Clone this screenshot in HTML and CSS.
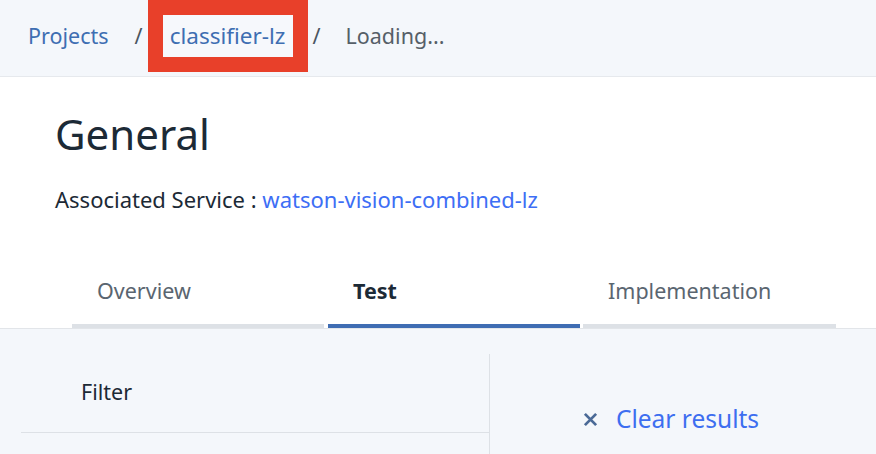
FILE: index.html
```html
<!DOCTYPE html>
<html>
<head>
<meta charset="utf-8">
<link rel="stylesheet" href="styles.css">
</head>
<body>
<header class="crumbs">
  <a class="crumb">Projects</a>
  <span class="sep sep-1">/</span>
  <span class="highlight"><a class="crumb inner">classifier-lz</a></span>
  <span class="sep sep-2">/</span>
  <span class="crumb-current">Loading...</span>
</header>
<section class="head">
  <h1 class="title">General</h1>
  <p class="service">Associated Service : <a class="service-link">watson-vision-combined-lz</a></p>
  <nav class="tabs">
    <div class="tab">Overview</div>
    <div class="tab active">Test</div>
    <div class="tab last">Implementation</div>
  </nav>
</section>
<section class="body">
  <div class="left">
    <div class="filter">Filter</div>
  </div>
  <div class="right">
    <a class="clear"><svg class="x" viewBox="0 0 16 16" width="15" height="15"><path d="M2 2 L14 14 M14 2 L2 14" stroke="#4b6a97" stroke-width="3" stroke-linecap="butt"/></svg><span>Clear results</span></a>
  </div>
</section>
</body>
</html>
```
FILE: styles.css
```css
* { box-sizing: border-box; }
html, body { margin: 0; padding: 0; }
body {
  width: 876px;
  height: 454px;
  overflow: hidden;
  background: #f4f7fb;
  font-family: "Noto Sans", "Open Sans", sans-serif;
}
.crumbs {
  height: 77px;
  background: #f4f7fb;
  border-bottom: 1px solid #e6e9ed;
  display: flex;
  align-items: flex-start;
  padding-left: 28px;
  font-size: 21.5px;
}
.crumb { color: #3e6eb2; }
.crumbs > .crumb, .sep, .crumb-current { margin-top: 21px; line-height: 30px; }
.sep { color: #4a5560; }
.sep-1 { margin-left: 26px; margin-right: 5px; }
.sep-2 { margin-left: 5px; margin-right: 25px; }
.crumb-current { color: #565f68; }
.highlight {
  width: 160px;
  height: 72px;
  border: 15px solid #e8402a;
  background: #f6f8fc;
  display: flex;
  align-items: center;
  justify-content: center;
}
.inner { line-height: 30px; margin-top: -1px; font-size: 22.5px; }
.head {
  background: #ffffff;
  border-bottom: 1px solid #e2e5e9;
}
.title {
  margin: 0;
  padding: 27px 0 0 55px;
  font-weight: 400;
  font-size: 42px;
  line-height: 60px;
  color: #1c2a36;
}
.service {
  margin: 20px 0 0 55px;
  font-size: 22px;
  line-height: 30px;
  color: #1c2a36;
}
.service-link { color: #3d6ef5; }
.tabs {
  display: flex;
  margin-left: 72px;
  margin-top: 62px;
}
.tab {
  width: 252px;
  margin-right: 4px;
  padding: 0 0 18px 25px;
  font-size: 21.5px;
  line-height: 30px;
  color: #5a6570;
  border-bottom: 4px solid #dde1e6;
}
.tab.last { width: 253px; margin-left: -1px; margin-right: 0; }
.tab.active {
  color: #1c2a36;
  font-weight: 700;
  border-bottom-color: #3f6db3;
}
.body {
  display: flex;
  padding-top: 25px;
}
.left {
  width: 468px;
  margin-left: 21px;
}
.filter {
  height: 79px;
  padding: 23px 0 0 60px;
  font-size: 21.5px;
  line-height: 30px;
  color: #1c2a36;
  border-bottom: 1px solid #dde1e6;
}
.right {
  flex: 1;
  border-left: 1px solid #dde1e6;
  height: 100px;
  padding: 49px 0 0 93px;
}
.clear {
  display: flex;
  align-items: center;
  gap: 18px;
  font-size: 24.5px;
  line-height: 32px;
  color: #3d6ef0;
}
.x { display: block; }
```
